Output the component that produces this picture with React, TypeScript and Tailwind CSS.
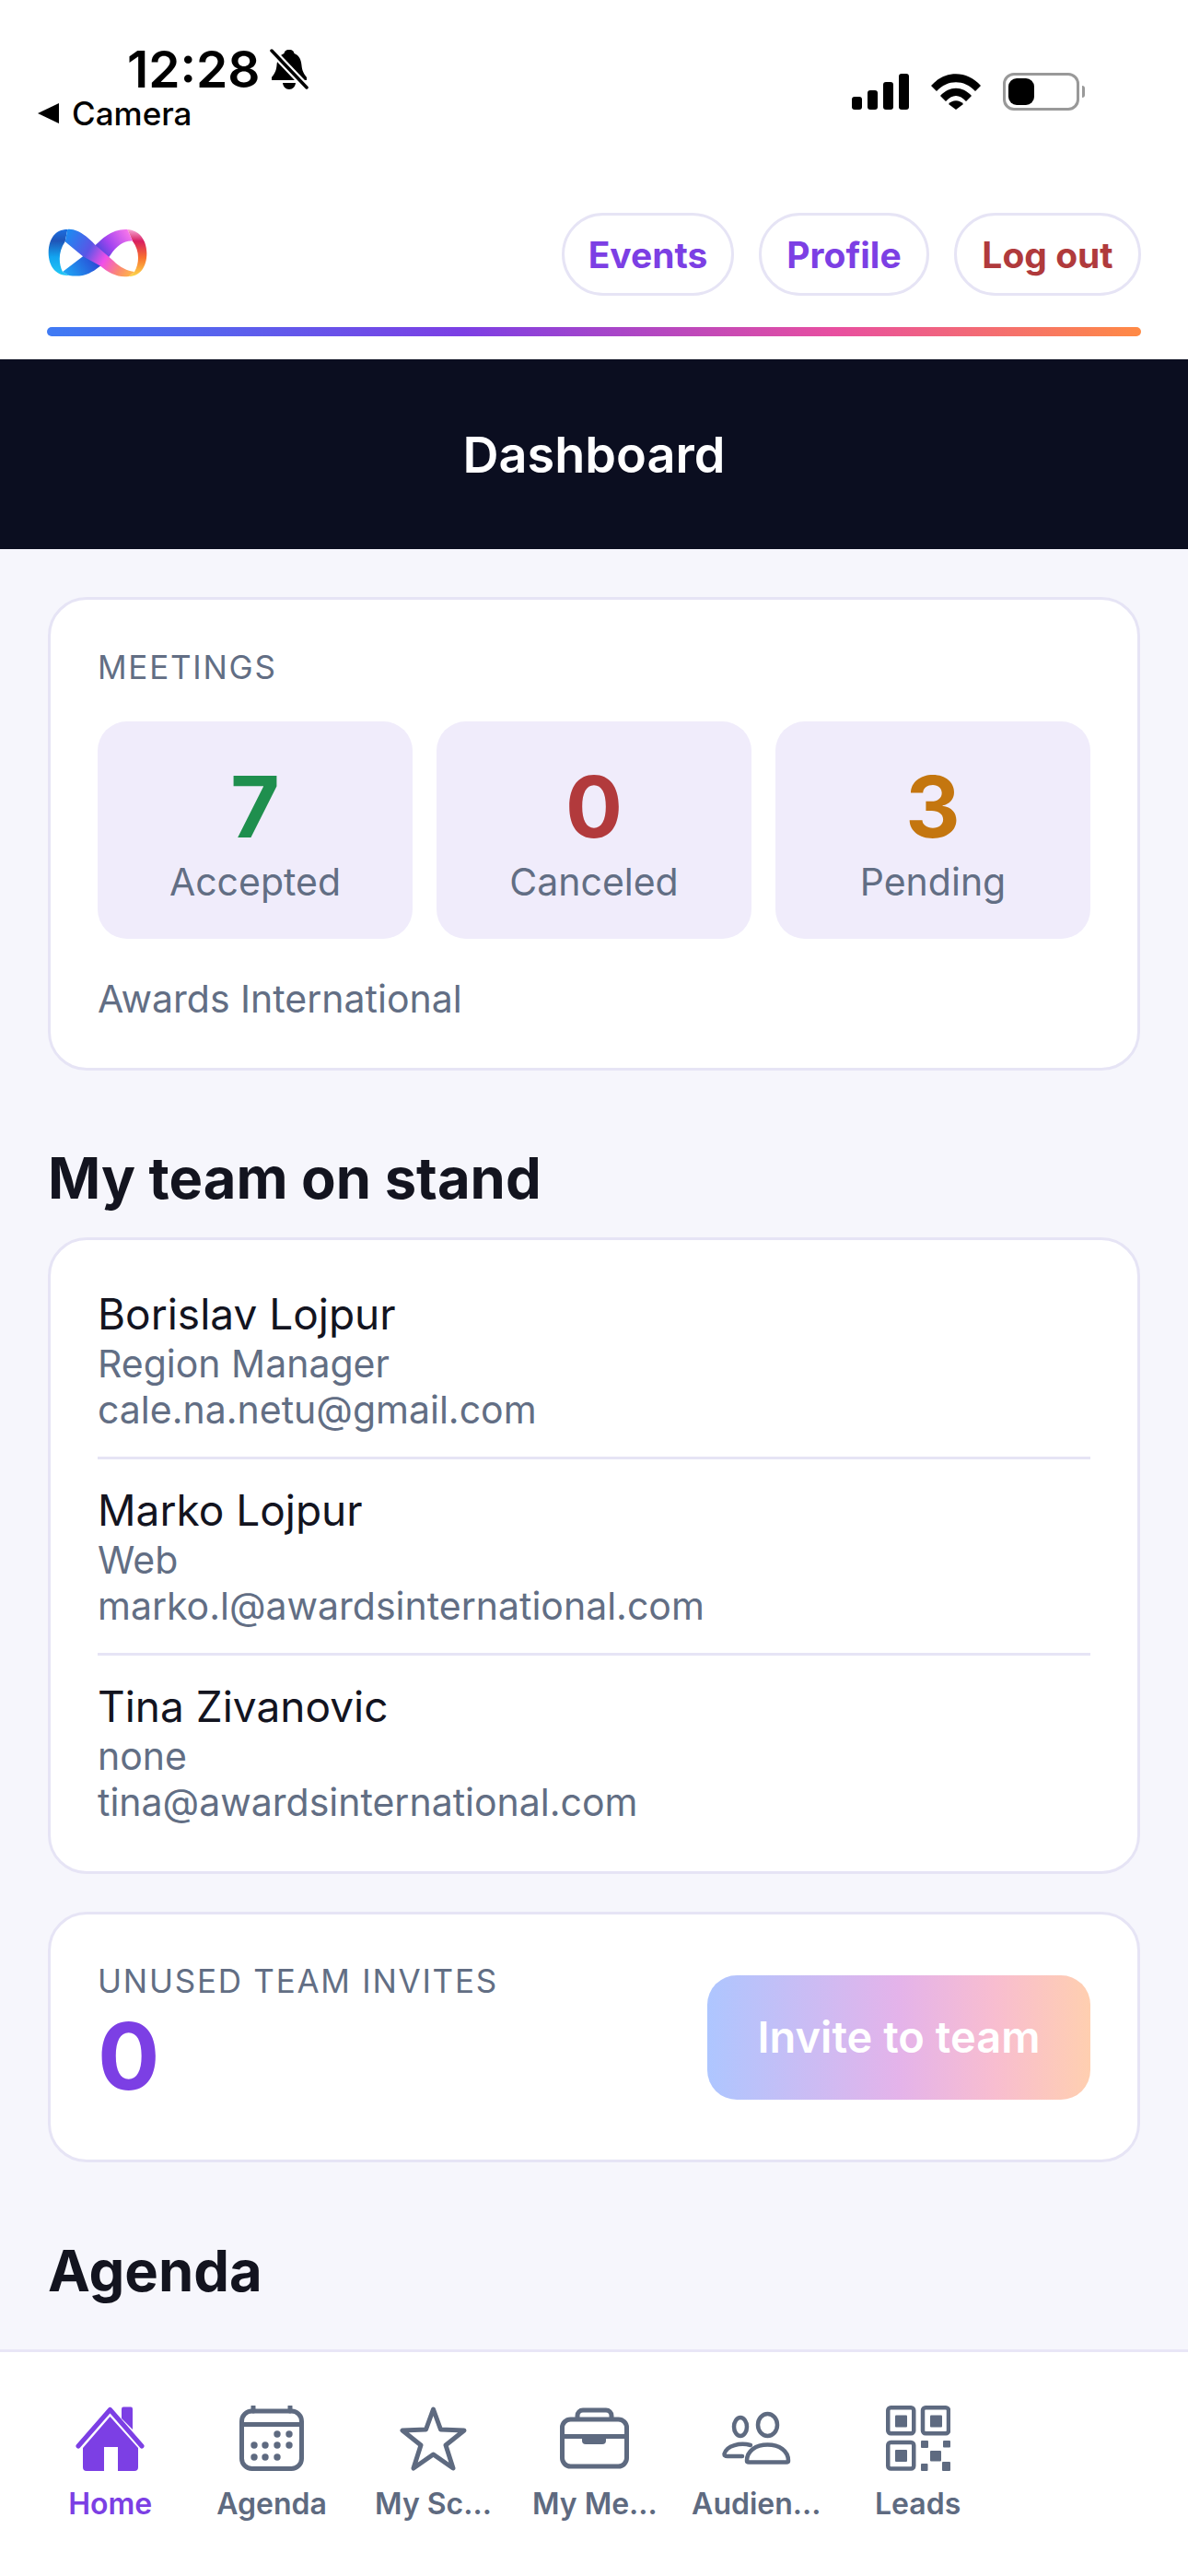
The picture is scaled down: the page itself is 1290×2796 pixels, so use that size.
const team = [
  { name: "Borislav Lojpur", role: "Region Manager", email: "cale.na.netu@gmail.com" },
  { name: "Marko Lojpur", role: "Web", email: "marko.l@awardsinternational.com" },
  { name: "Tina Zivanovic", role: "none", email: "tina@awardsinternational.com" },
];

const stats = [
  { value: "7", label: "Accepted", color: "text-[#1f8f4e]" },
  { value: "0", label: "Canceled", color: "text-[#b23a3c]" },
  { value: "3", label: "Pending", color: "text-[#c4760f]" },
];

function Logo() {
  return (
    <svg width="109" height="56" viewBox="33 39 327 168" fill="none">
      <defs>
        <linearGradient id="lg-front" gradientUnits="userSpaceOnUse" x1="90" y1="60" x2="320" y2="190">
          <stop offset="0" stopColor="#1a8df2" />
          <stop offset="0.35" stopColor="#5a55e6" />
          <stop offset="0.58" stopColor="#f04fe8" />
          <stop offset="0.8" stopColor="#fb8a70" />
          <stop offset="1" stopColor="#ffc040" />
        </linearGradient>
        <linearGradient id="lg-back" gradientUnits="userSpaceOnUse" x1="90" y1="190" x2="300" y2="45">
          <stop offset="0" stopColor="#1ea8f6" />
          <stop offset="0.45" stopColor="#2a48d4" />
          <stop offset="0.7" stopColor="#a444f0" />
          <stop offset="1" stopColor="#fb78ea" />
        </linearGradient>
        <linearGradient id="lg-left" x1="0" y1="0" x2="0" y2="1">
          <stop offset="0" stopColor="#1c6ee0" />
          <stop offset="0.25" stopColor="#1f55b8" />
          <stop offset="0.6" stopColor="#12a4f0" />
          <stop offset="1" stopColor="#22c8f5" />
        </linearGradient>
        <linearGradient id="lg-right" x1="0" y1="0" x2="0" y2="1">
          <stop offset="0" stopColor="#f7a8d8" />
          <stop offset="0.25" stopColor="#d81e60" />
          <stop offset="0.6" stopColor="#f8702e" />
          <stop offset="1" stopColor="#fdd84a" />
        </linearGradient>
      </defs>
      <path d="M100 42C58 42 38 75 38 118C38 165 65 195 105 192L84 180C70 150 70 115 92 82Z" fill="url(#lg-left)" />
      <path d="M295 42C340 45 358 85 358 120C358 165 335 195 300 195L318 180C335 150 335 110 312 80Z" fill="url(#lg-right)" />
      <path d="M84 180L150 130L200 85C230 55 260 40 295 42L312 80C285 78 260 95 240 125C220 155 190 175 170 185C150 195 125 195 105 192Z" fill="url(#lg-back)" />
      <path d="M100 42C130 38 165 65 190 92L250 145C270 165 295 178 318 180L300 195C265 200 235 185 205 160L150 130L92 82Z" fill="url(#lg-front)" />
    </svg>
  );
}

function BellOff() {
  return (
    <svg width="42" height="46" viewBox="0 0 42 46" fill="none">
      <path d="M21 2C25 2 26 4 26.5 6C32 8 34 13 34.5 19C35 25 37 28 40 32L40 35L9 35L2 35L2 32C5 28 7 25 7.5 19C8 13 10 8 15.5 6C16 4 17 2 21 2Z" fill="#000" />
      <path d="M14 38H28C27.5 42 25 45 21 45C17 45 14.5 42 14 38Z" fill="#000" />
      <path d="M1 2L41 44" stroke="#fff" strokeWidth="8" />
      <path d="M2 3L40 43" stroke="#000" strokeWidth="3.5" strokeLinecap="round" />
    </svg>
  );
}

function Wifi() {
  return (
    <svg width="54" height="39" viewBox="0 0 54 39" fill="#000">
      <path d="M0 13C15 -4 39 -4 54 13L48 19C36 6 18 6 6 19Z" />
      <path d="M10 24C20 13 34 13 44 24L38 30C31 22 23 22 16 30Z" />
      <path d="M19 33C23 28 31 28 35 33L27 39Z" />
    </svg>
  );
}

function HomeIcon() {
  return (
    <svg width="75" height="71" viewBox="0 0 75 71" fill="none">
      <path d="M50 3.5a2 2 0 0 1 2-2h8a2 2 0 0 1 2 2V26L50 14Z" fill="#7c3fe4" />
      <path d="M3 44L37.5 4.5L72 44" stroke="#7c3fe4" strokeWidth="5" strokeLinecap="round" strokeLinejoin="round" />
      <path d="M37.5 12L68 46V67a4 4 0 0 1-4 4H46V45H31V71H12a4 4 0 0 1-4-4V46Z" fill="#7c3fe4" />
    </svg>
  );
}

function CalendarIcon() {
  const dots = [
    [41, 31], [54, 31],
    [16, 43], [28, 43], [41, 43], [54, 43],
    [16, 56], [28, 56], [41, 56],
  ];
  return (
    <svg width="70" height="71" viewBox="0 0 70 71" fill="none" stroke="#5e6a80" strokeWidth="5">
      <rect x="2.5" y="6" width="65" height="62.5" rx="11" />
      <path d="M2.5 20.5H67.5" />
      <path d="M15 1V6M55 1V6" strokeLinecap="round" />
      {dots.map(([x, y]) => (
        <circle key={`${x}-${y}`} cx={x} cy={y} r="3.7" fill="#5e6a80" stroke="none" />
      ))}
    </svg>
  );
}

function StarIcon() {
  return (
    <svg width="75" height="71" viewBox="0 0 75 71" fill="none">
      <path d="M37.5 4L45.5 26L71 27L51 43L59 68L37.5 53L16 68L24 43L4 27L29.5 26Z" stroke="#5e6a80" strokeWidth="5" strokeLinejoin="round" />
    </svg>
  );
}

function BriefcaseIcon() {
  return (
    <svg width="75" height="71" viewBox="0 0 75 71" fill="none" stroke="#5e6a80" strokeWidth="5">
      <rect x="2.5" y="15" width="70" height="51" rx="9" />
      <path d="M19 15V11a6 6 0 0 1 6-6H50a6 6 0 0 1 6 6V15" />
      <path d="M2.5 33.5H72.5" />
      <path d="M24 33H50V38a4 4 0 0 1-4 4H28a4 4 0 0 1-4-4Z" fill="#5e6a80" stroke="none" />
    </svg>
  );
}

function AudienceIcon() {
  return (
    <svg width="75" height="71" viewBox="0 0 75 71" fill="none" stroke="#5e6a80" strokeWidth="4.5">
      <ellipse cx="20" cy="23" rx="7" ry="10" />
      <ellipse cx="49.5" cy="21" rx="10.5" ry="12" />
      <path d="M31 43C20 40 5 43 2.5 52.5C2.5 54.5 4 55 6 55H22" strokeLinecap="round" />
      <path d="M27 60C27 49 37 42.5 49.5 42.5C62 42.5 72 49 72 60C72 61 71.5 61.5 70 61.5H29C27.5 61.5 27 61 27 60Z" />
    </svg>
  );
}

function QrIcon() {
  return (
    <svg width="70" height="71" viewBox="0 0 70 71" fill="#5e6a80">
      <g fill="none" stroke="#5e6a80" strokeWidth="4.5">
        <rect x="2.25" y="2.25" width="28" height="28" rx="3" />
        <rect x="40" y="2.25" width="28" height="28" rx="3" />
        <rect x="2.25" y="40" width="28" height="28.5" rx="3" />
      </g>
      <rect x="10" y="10.5" width="13" height="13" rx="1" />
      <rect x="48" y="10.5" width="13" height="13" rx="1" />
      <rect x="10" y="48" width="13" height="13" rx="1" />
      <rect x="38" y="38" width="8" height="8" rx="1" />
      <rect x="62" y="38" width="8" height="7.5" rx="1" />
      <rect x="48" y="49" width="12" height="11.5" rx="1" />
      <rect x="38" y="63" width="7.5" height="8" rx="1" />
      <rect x="61" y="61" width="9" height="10" rx="1" />
    </svg>
  );
}

const navItems = [
  { label: "Home", icon: <HomeIcon />, active: true },
  { label: "Agenda", icon: <CalendarIcon /> },
  { label: "My Sc...", icon: <StarIcon /> },
  { label: "My Me...", icon: <BriefcaseIcon /> },
  { label: "Audien...", icon: <AudienceIcon /> },
  { label: "Leads", icon: <QrIcon /> },
];

export default function App() {
  return (
    <div className="flex h-[2796px] w-[1290px] flex-col overflow-hidden bg-white font-['Inter',sans-serif] text-[#13141f]">
      {/* Status bar */}
      <div className="flex h-[231px] items-start justify-between pl-[41px] pr-[112px] pt-[52px] text-black">
        <div>
          <div className="flex items-center gap-[10px] pl-[97px]">
            <span className="text-[55px] font-semibold leading-[46px]">12:28</span>
            <BellOff />
          </div>
          <div className="mt-[9px] flex items-center gap-[14px]">
            <span className="h-0 w-0 border-y-[11px] border-r-[23px] border-y-transparent border-r-black" />
            <span className="text-[35px] font-medium leading-[32px]">Camera</span>
          </div>
        </div>
        <div className="flex items-center gap-[24px] pt-[27px]">
          <div className="flex items-end gap-[6px]">
            <span className="h-[14px] w-[11px] rounded-[3px] bg-black" />
            <span className="h-[21px] w-[11px] rounded-[3px] bg-black" />
            <span className="h-[30px] w-[11px] rounded-[3px] bg-black" />
            <span className="h-[39px] w-[11px] rounded-[3px] bg-black" />
          </div>
          <Wifi />
          <div className="flex items-center gap-[3px]">
            <div className="flex h-[41px] w-[83px] items-center rounded-[12px] border-[3px] border-[#999999] pl-[3px]">
              <span className="h-[29px] w-[28px] rounded-[9px] bg-black" />
            </div>
            <span className="h-[13px] w-[3px] rounded-r-full bg-[#999999]" />
          </div>
        </div>
      </div>

      {/* Top nav */}
      <div className="px-[51px]">
        <div className="flex h-[90px] items-center justify-between">
          <Logo />
          <div className="flex gap-[27px] text-[39px] font-bold leading-none">
            <span className="flex h-[90px] w-[187px] items-center justify-center rounded-full border-[3px] border-[#e6e4f5] text-[#7c3fe4]">Events</span>
            <span className="flex h-[90px] w-[185px] items-center justify-center rounded-full border-[3px] border-[#e6e4f5] text-[#7c3fe4]">Profile</span>
            <span className="flex h-[90px] w-[203px] items-center justify-center rounded-full border-[3px] border-[#e6e4f5] text-[#b03a3c]">Log out</span>
          </div>
        </div>
        <div className="mt-[34px] h-[10px] rounded-full bg-[linear-gradient(90deg,#3f7bf4_0%,#7c3fe4_38%,#e84fa0_72%,#ff8a45_100%)]" />
      </div>

      <div className="mt-[25px] flex h-[206px] items-center justify-center bg-[#0b0e20] text-[54px] font-semibold text-white">
        Dashboard
      </div>

      <main className="min-h-0 flex-1 overflow-hidden bg-[#f6f6fc] px-[52px] pt-[52px]">
        {/* Meetings */}
        <section className="rounded-[42px] border-[3px] border-[#e6e4f5] bg-white px-[51px] pb-[51px] pt-[53px]">
          <div className="text-[35px] leading-[40px] tracking-[0.05em] text-[#626e84]">MEETINGS</div>
          <div className="mt-[39px] grid grid-cols-3 gap-[26px]">
            {stats.map((s) => (
              <div key={s.label} className="flex h-[236px] flex-col items-center rounded-[32px] bg-[#f0ecfb] pt-[49px]">
                <span className={`text-[92px] font-bold leading-[88px] ${s.color}`}>{s.value}</span>
                <span className="mt-[13px] text-[41px] leading-[48px] text-[#626e84]">{s.label}</span>
              </div>
            ))}
          </div>
          <div className="mt-[41px] text-[41px] leading-[48px] text-[#626e84]">Awards International</div>
        </section>

        <h2 className="mb-[28px] mt-[81px] text-[61.5px] font-bold leading-[72px]">My team on stand</h2>

        {/* Team */}
        <section className="rounded-[42px] border-[3px] border-[#e6e4f5] bg-white px-[51px] pb-[50px] pt-[52px]">
          {team.map((m, i) => (
            <div key={m.name} className={i > 0 ? "mt-[26px] border-t-[3px] border-[#e6e4f5] pt-[27px]" : ""}>
              <div className="text-[46px] leading-[56px]">{m.name}</div>
              <div className="mt-px text-[41px] leading-[50px] text-[#626e84]">{m.role}</div>
              <div className="text-[41px] leading-[50px] text-[#626e84]">{m.email}</div>
            </div>
          ))}
        </section>

        {/* Invites */}
        <section className="mt-[41px] flex h-[272px] items-center justify-between rounded-[42px] border-[3px] border-[#e6e4f5] bg-white px-[51px]">
          <div className="pb-[10px]">
            <div className="text-[35px] leading-[40px] tracking-[0.05em] text-[#626e84]">UNUSED TEAM INVITES</div>
            <div className="mt-[12px] text-[100px] font-bold leading-[100px] text-[#7c3fe4]">0</div>
          </div>
          <div className="flex h-[135px] w-[416px] items-center justify-center rounded-[32px] bg-[linear-gradient(90deg,#aec6ff_0%,#e4b3ea_50%,#f8bdd0_75%,#ffcfb0_100%)] text-[47px] font-semibold text-white">
            Invite to team
          </div>
        </section>

        <h2 className="mt-[82px] text-[61.5px] font-bold leading-[72px]">Agenda</h2>
      </main>

      {/* Bottom tabs */}
      <nav className="flex h-[246px] shrink-0 border-t-[3px] border-[#e9e6f6] bg-white pl-[32px] pt-[58px]">
        {navItems.map((item) => (
          <div key={item.label} className="flex w-[175.4px] flex-col items-center">
            <div className="flex h-[71px] items-center justify-center">{item.icon}</div>
            <span className={`mt-[16px] text-[32px] font-semibold leading-[40px] ${item.active ? "text-[#7c3fe4]" : "text-[#5e6a80]"}`}>
              {item.label}
            </span>
          </div>
        ))}
      </nav>
    </div>
  );
}
